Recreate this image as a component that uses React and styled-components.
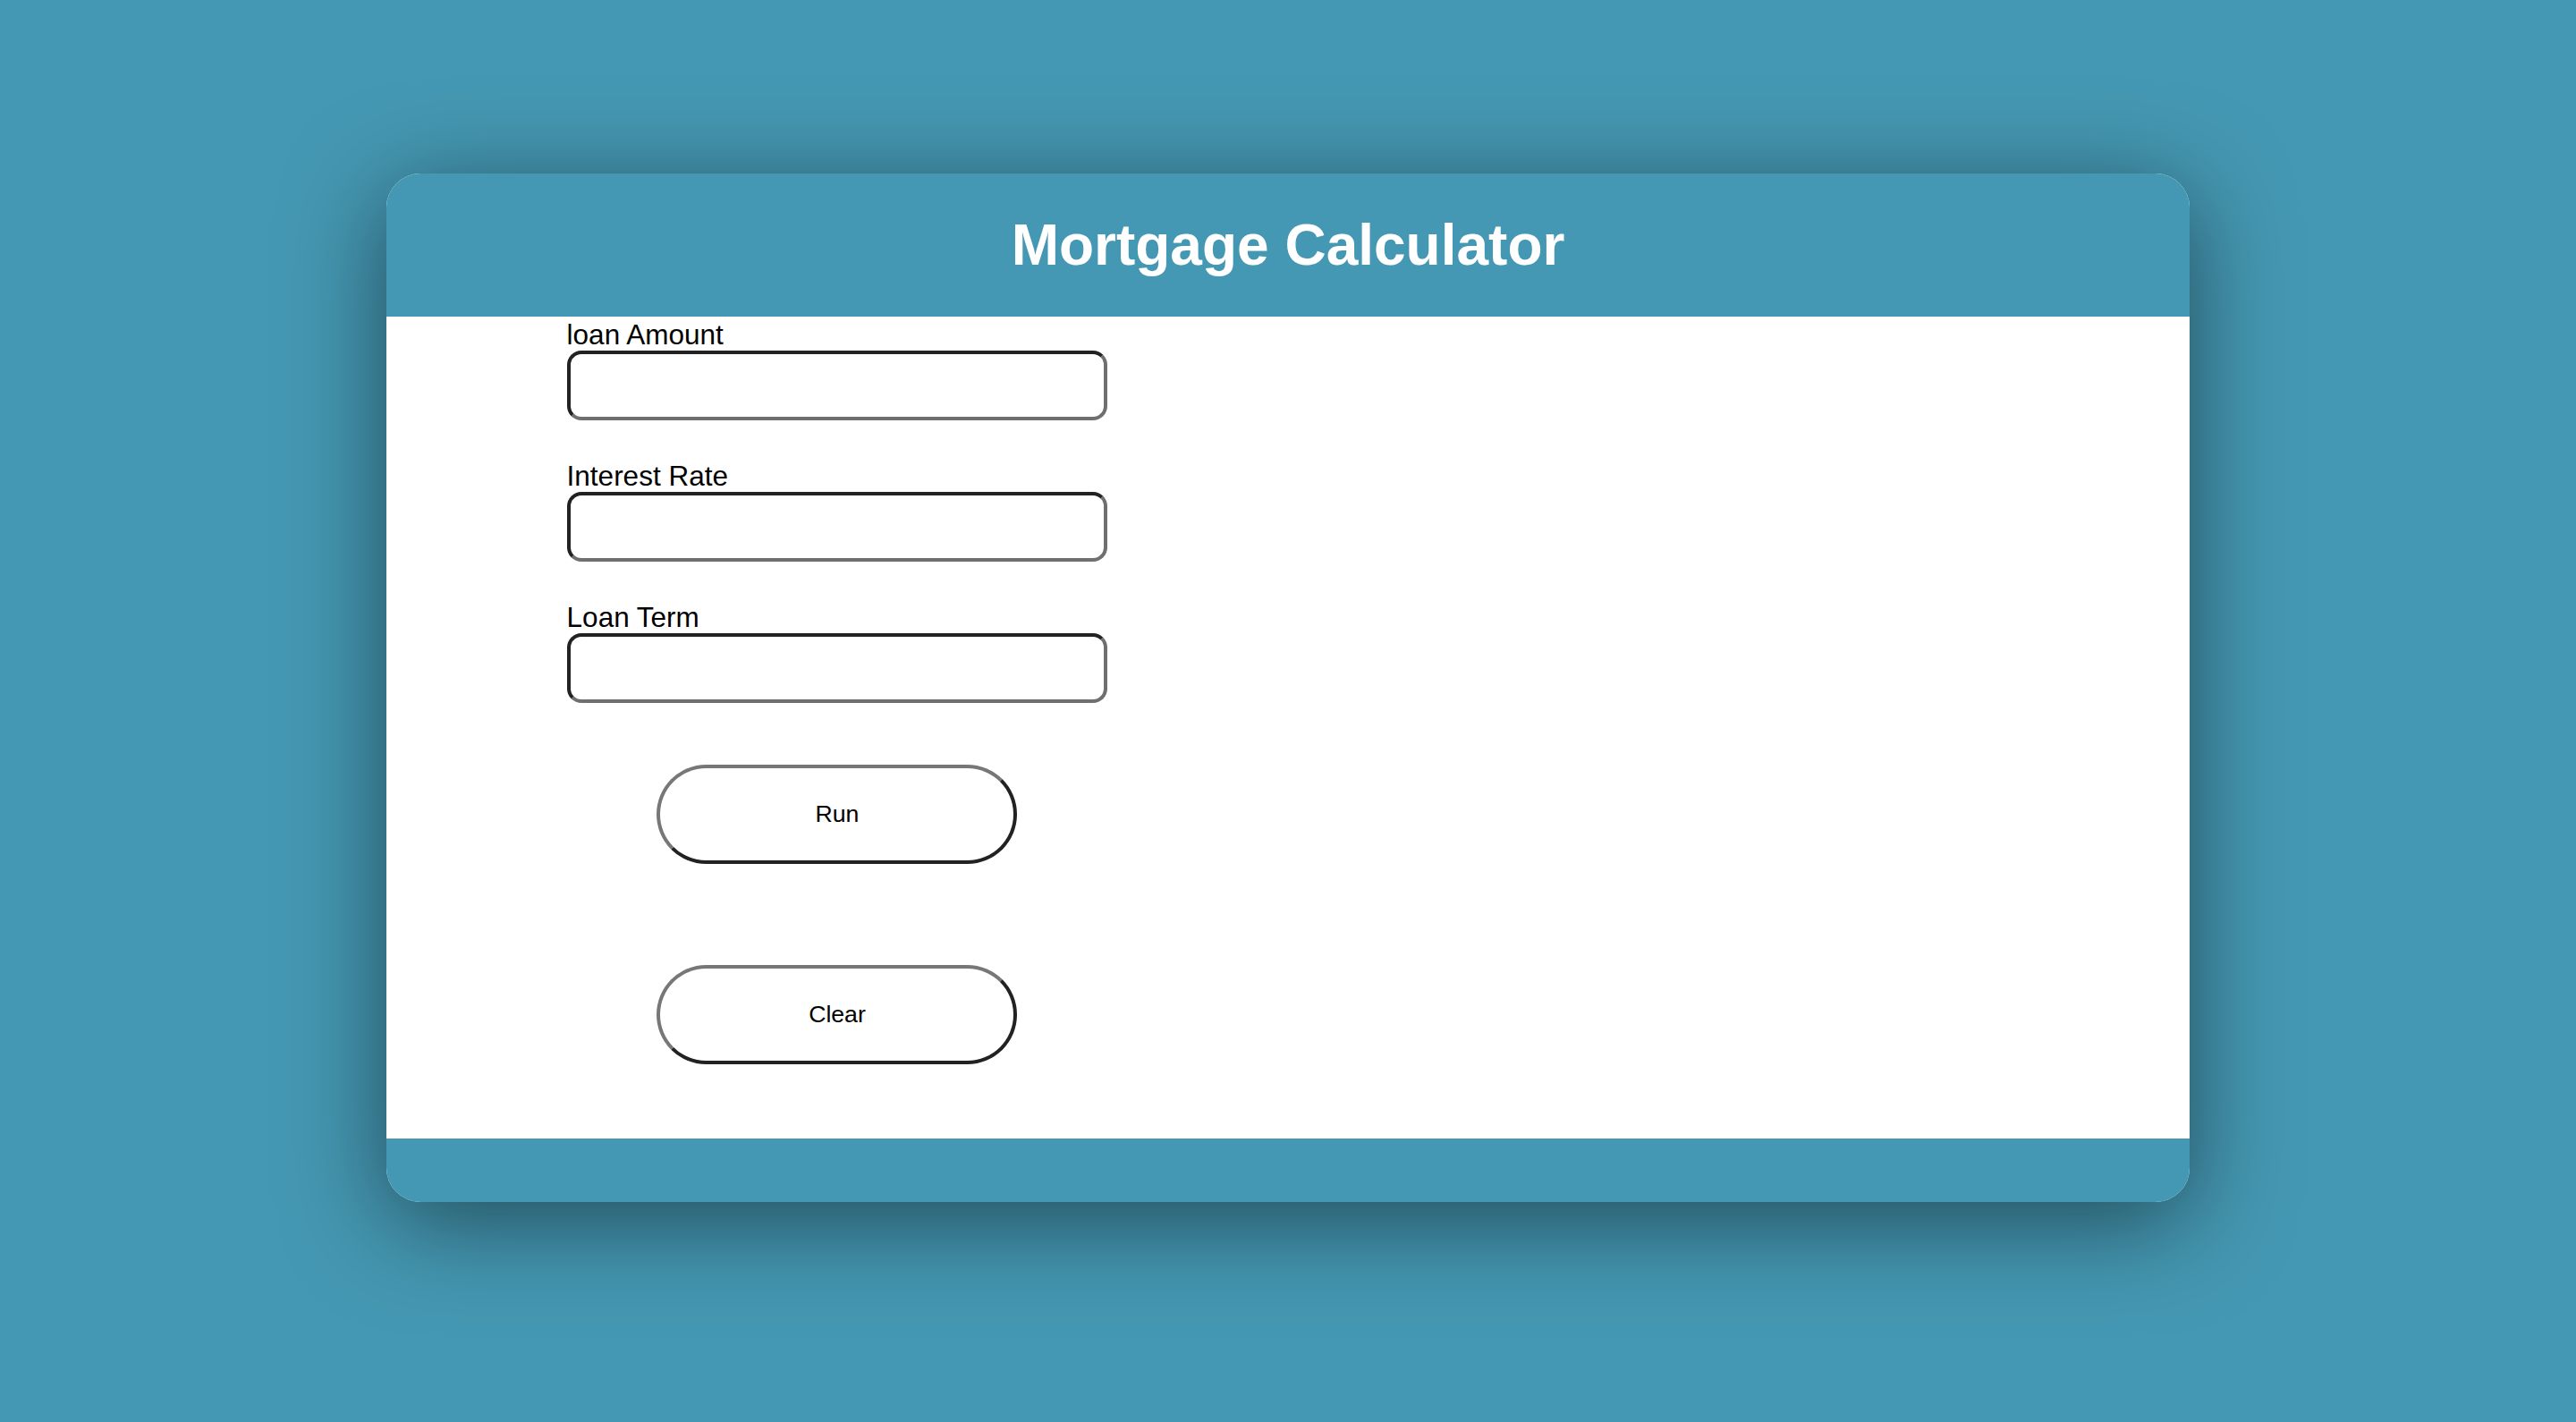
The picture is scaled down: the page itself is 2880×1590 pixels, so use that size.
import React from "react";
import styled, { createGlobalStyle } from "styled-components";

const GlobalStyle = createGlobalStyle`
  html, body {
    margin: 0;
    padding: 0;
    background: #4598b3;
    font-family: "Liberation Sans", Arial, Helvetica, sans-serif;
  }
  #root {
    min-height: 1590px;
    overflow: hidden;
  }
`;

const Page = styled.div`
  display: flex;
  justify-content: center;
  padding-top: 194px;
  min-height: 1590px;
  box-sizing: border-box;
`;

const Card = styled.div`
  width: 70%;
  height: 1150px;
  display: flex;
  flex-direction: column;
  border-radius: 38px;
  overflow: hidden;
  background: #ffffff;
  box-shadow: 0 22px 110px rgba(0, 0, 0, 0.5);
`;

const Header = styled.header`
  background: #4598b3;
  height: 160px;
  display: flex;
  align-items: center;
  justify-content: center;
`;

const Title = styled.h1`
  margin: 0;
  color: #ffffff;
  font-family: "Liberation Sans", Arial, Helvetica, sans-serif;
  font-weight: 700;
  font-size: 64px;
  line-height: 74px;
`;

const Body = styled.main`
  flex: 1;
  background: #ffffff;
  padding-top: 2px;
`;

const Form = styled.form`
  margin-left: 10%;
  width: 30%;
  display: flex;
  flex-direction: column;
  gap: 44px;
`;

const Field = styled.div`
  display: flex;
  flex-direction: column;
`;

const Label = styled.label`
  font-size: 31.5px;
  line-height: 36px;
  color: #000000;
`;

const Input = styled.input`
  box-sizing: border-box;
  width: 100%;
  height: 78px;
  border: 4px solid;
  border-color: #222222 #6f6f6f #6f6f6f #222222;
  border-radius: 16px;
  background: #ffffff;
  outline: none;
  font-size: 28px;
  font-family: "Liberation Sans", Arial, sans-serif;
  padding: 0 12px;
`;

const Actions = styled.div`
  display: flex;
  flex-direction: column;
  align-items: center;
  gap: 113px;
  margin-top: 25px;
`;

const Button = styled.button`
  box-sizing: border-box;
  width: 403px;
  height: 111px;
  border: 4px solid;
  border-color: #777777 #222222 #222222 #777777;
  border-radius: 60px;
  background: #ffffff;
  color: #000000;
  font-family: "Liberation Sans", Arial, sans-serif;
  font-size: 26.67px;
  cursor: pointer;
`;

const Footer = styled.footer`
  background: #4598b3;
  height: 71px;
`;

export default function App() {
  return (
    <>
      <GlobalStyle />
      <Page>
        <Card>
          <Header>
            <Title>Mortgage Calculator</Title>
          </Header>
          <Body>
            <Form onSubmit={(e) => e.preventDefault()}>
              <Field>
                <Label htmlFor="amount">loan Amount</Label>
                <Input id="amount" type="text" />
              </Field>
              <Field>
                <Label htmlFor="rate">Interest Rate</Label>
                <Input id="rate" type="text" />
              </Field>
              <Field>
                <Label htmlFor="term">Loan Term</Label>
                <Input id="term" type="text" />
              </Field>
              <Actions>
                <Button type="submit">Run</Button>
                <Button type="button">Clear</Button>
              </Actions>
            </Form>
          </Body>
          <Footer />
        </Card>
      </Page>
    </>
  );
}
